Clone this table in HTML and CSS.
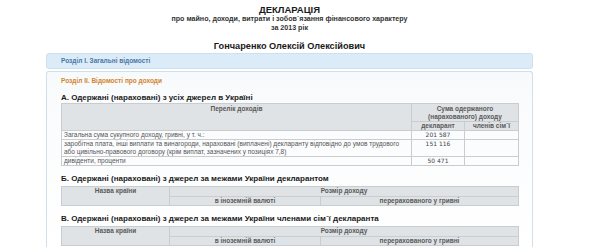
FILE: index.html
```html
<!DOCTYPE html>
<html lang="uk">
<head>
    <meta charset="UTF-8">
    <title>Декларація</title>
    <link rel="stylesheet" href="styles.css">
</head>
<body>
    <div class="page">
        <div class="doc-head">
            <h1>ДЕКЛАРАЦІЯ</h1>
            <p>про майно, доходи, витрати і зобов`язання фінансового характеру</p>
            <p>за 2013 рік</p>
        </div>
        <h2 class="person">Гончаренко Олексій Олексійович</h2>

        <div class="section closed">
            <div class="section-title">Розділ І. Загальні відомості</div>
        </div>

        <div class="section open">
            <div class="section-title">Розділ ІІ. Відомості про доходи</div>
            <div class="section-body">
                <h3>А. Одержані (нараховані) з усіх джерел в Україні</h3>
                <table class="grid income">
                    <thead>
                        <tr>
                            <th rowspan="2" class="top">Перелік доходів</th>
                            <th colspan="2">Сума одержаного<br>(нарахованого) доходу</th>
                        </tr>
                        <tr>
                            <th class="w-decl">декларант</th>
                            <th class="w-fam">членів сім`ї</th>
                        </tr>
                    </thead>
                    <tbody>
                        <tr>
                            <td>Загальна сума сукупного доходу, гривні, у т. ч.:</td>
                            <td class="num">201 587</td>
                            <td></td>
                        </tr>
                        <tr>
                            <td>заробітна плата, інші виплати та винагороди, нараховані (виплачені) декларанту відповідно до умов трудового<br>або цивільно-правового договору (крім виплат, зазначених у позиціях 7,8)</td>
                            <td class="num">151 116</td>
                            <td></td>
                        </tr>
                        <tr>
                            <td>дивіденти, проценти</td>
                            <td class="num">50 471</td>
                            <td></td>
                        </tr>
                    </tbody>
                </table>

                <h3>Б. Одержані (нараховані) з джерел за межами України декларантом</h3>
                <table class="grid abroad">
                    <tr>
                        <th rowspan="2" class="top c-country">Назва країни</th>
                        <th colspan="2">Розмір доходу</th>
                    </tr>
                    <tr>
                        <th class="c-foreign">в іноземній валюті</th>
                        <th>перерахованого у гривні</th>
                    </tr>
                </table>

                <h3>В. Одержані (нараховані) з джерел за межами України членами сім`ї декларанта</h3>
                <table class="grid abroad">
                    <tr>
                        <th rowspan="2" class="top c-country">Назва країни</th>
                        <th colspan="2">Розмір доходу</th>
                    </tr>
                    <tr>
                        <th class="c-foreign">в іноземній валюті</th>
                        <th>перерахованого у гривні</th>
                    </tr>
                </table>
            </div>
        </div>
    </div>
</body>
</html>
```

FILE: styles.css
```css
body {
    margin: 0;
    background: #fff;
    font-family: "Liberation Sans", Arial, sans-serif;
    color: #222;
}
.page {
    width: 487px;
    margin-left: 46px;
}
.doc-head {
    text-align: center;
    padding-top: 5px;
}
.doc-head h1 {
    margin: 0;
    font-size: 9.5px;
    line-height: 10px;
    color: #1a1a1a;
}
.doc-head p {
    margin: 0;
    font-size: 7.1px;
    font-weight: bold;
    line-height: 9px;
    color: #333;
}
.person {
    margin: 8px 0 0;
    text-align: center;
    font-size: 9.2px;
    line-height: 11px;
    color: #1a1a1a;
}
.section {
    border: 1px solid #cde0ec;
    border-radius: 3px;
}
.section.closed {
    margin-top: 1px;
    background: #dcebf8;
}
.section.closed .section-title {
    line-height: 14px;
    color: #4a78a6;
}
.section.open {
    margin-top: 2px;
    border-bottom: none;
    border-radius: 3px 3px 0 0;
    background: linear-gradient(#f7fafc, #fbfcfd 60px, #fff);
    height: 180px;
}
.section-title {
    padding-left: 14px;
    font-size: 6.5px;
    font-weight: bold;
}
.section.open .section-title {
    line-height: 17px;
    color: #d5842c;
}
.section-body {
    padding: 4px 13px 0 14px;
}
h3 {
    margin: 0;
    font-size: 8px;
    line-height: 10px;
    color: #1a1a1a;
}
.grid + h3 {
    margin-top: 8px;
}
.grid {
    width: 458px;
    border-collapse: collapse;
    font-family: "Liberation Sans", Arial, sans-serif;
    font-size: 6.5px;
    color: #555;
}
.abroad {
    margin-top: 2px;
}
.grid th,
.grid td {
    border: 1px solid #c9cdd0;
    padding: 0 2px;
    line-height: 8px;
    vertical-align: top;
}
.grid th {
    background: #dfe3e6;
    font-weight: bold;
    text-align: center;
    color: #5a5a5a;
}
.income thead tr:first-child th {
    padding-top: 1px;
    height: 16px;
}
.income th.top {
    padding-top: 4px;
}
.w-decl {
    width: 48px;
}
.w-fam {
    width: 49px;
}
.grid td.num {
    text-align: center;
    font-family: "DejaVu Sans", Verdana, sans-serif;
    font-size: 6px;
    color: #444;
}
.abroad th {
    line-height: 8.5px;
}
.c-country {
    width: 103px;
}
.c-foreign {
    width: 146px;
}
```
